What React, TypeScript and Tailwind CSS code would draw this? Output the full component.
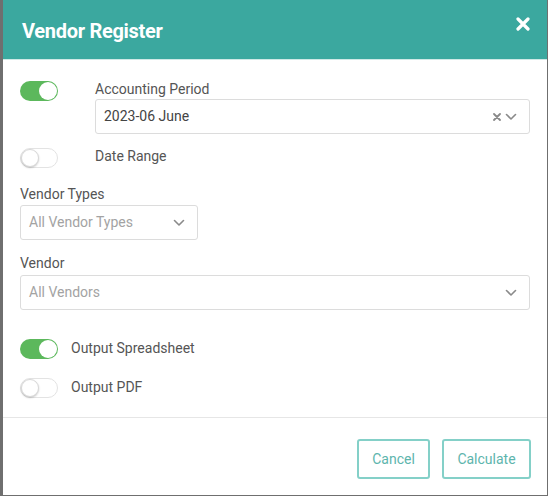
import React from "react";

function Toggle({ on }: { on: boolean }) {
  return (
    <div
      className={
        on
          ? "relative h-[20px] w-[38px] rounded-full bg-[#5cb85c]"
          : "relative h-[20px] w-[38px] rounded-full border border-[#e3e3e3] bg-white"
      }
    >
      <div
        className={
          on
            ? "absolute right-[1px] top-[1px] h-[18px] w-[18px] rounded-full bg-white"
            : "absolute left-0 top-0 h-[18px] w-[18px] rounded-full border border-[#d8d8d8] bg-white shadow-[0_1px_2px_rgba(0,0,0,0.2)]"
        }
      />
    </div>
  );
}

function Chevron() {
  return (
    <svg width="12" height="8" viewBox="0 0 12 8" fill="none">
      <path d="M1.5 1.5 L6 6 L10.5 1.5" stroke="#8a8a8a" strokeWidth="1.6" strokeLinecap="round" strokeLinejoin="round" />
    </svg>
  );
}

function Select({
  value,
  placeholder,
  clearable,
  className,
}: {
  value: string;
  placeholder?: boolean;
  clearable?: boolean;
  className?: string;
}) {
  return (
    <div
      className={
        "flex h-[35px] items-center justify-between rounded-[3px] border border-[#dcdcdc] bg-white pl-[8px] pr-[12px] " +
        (className ?? "")
      }
    >
      <span className={placeholder ? "text-[14px] text-[#a3a3a3]" : "text-[14px] text-[#444]"}>{value}</span>
      <div className="flex items-center gap-[4px]">
        {clearable && (
          <svg width="8" height="8" viewBox="0 0 8 8">
            <path d="M1 1 L7 7 M7 1 L1 7" stroke="#8a8a8a" strokeWidth="1.8" strokeLinecap="round" />
          </svg>
        )}
        <Chevron />
      </div>
    </div>
  );
}

export default function App() {
  return (
    <div className="h-[497px] w-[550px] bg-white" style={{ fontFamily: "Roboto, 'Liberation Sans', sans-serif" }}>
      <div className="flex h-[496px] w-[548px] flex-col border-b border-l-[3px] border-r border-[#6f6f6f] bg-white">
        <div className="flex h-[60px] shrink-0 items-center justify-between border-b border-[#cfe9e6] bg-[#3ba89f] pl-[19px] pr-[17px]">
          <h1 className="mt-[2px] text-[20px] font-bold tracking-[-0.3px] text-white">Vendor Register</h1>
          <svg width="14" height="14" viewBox="0 0 14 14" className="-mt-[12px]">
            <path d="M2 2 L12 12 M12 2 L2 12" stroke="white" strokeWidth="3.2" strokeLinecap="round" />
          </svg>
        </div>

        <div className="flex flex-1 flex-col px-[17px] pt-[20px] text-[#555]">
          <div className="flex">
            <div className="w-[75px] pt-[1px]">
              <Toggle on />
            </div>
            <div className="flex-1">
              <div className="text-[14px] leading-[18px] text-[#555]">Accounting Period</div>
              <Select value="2023-06 June" clearable className="mt-[1px]" />
            </div>
          </div>

          <div className="mt-[14px] flex items-center">
            <div className="w-[75px]">
              <Toggle on={false} />
            </div>
            <span className="-mt-[4px] text-[14px] text-[#555]">Date Range</span>
          </div>

          <div className="mt-[17px] text-[14px] leading-[18px] text-[#555]">Vendor Types</div>
          <Select value="All Vendor Types" placeholder className="mt-[2px] w-[178px]" />

          <div className="mt-[14px] text-[14px] leading-[18px] text-[#555]">Vendor</div>
          <Select value="All Vendors" placeholder className="mt-[3px]" />

          <div className="mt-[28px] flex items-center gap-[13px]">
            <Toggle on />
            <span className="text-[14px] text-[#555]">Output Spreadsheet</span>
          </div>
          <div className="mt-[18px] flex items-center gap-[13px]">
            <Toggle on={false} />
            <span className="text-[14px] text-[#555]">Output PDF</span>
          </div>
        </div>

        <div className="flex h-[78px] shrink-0 items-start justify-end gap-[12px] border-t border-[#e6e6e6] pr-[16px] pt-[21px]">
          <button className="h-[40px] w-[73px] rounded-[3px] border-2 border-[#84d0c8] text-[14px] text-[#5db5ad]">
            Cancel
          </button>
          <button className="h-[40px] w-[89px] rounded-[3px] border-2 border-[#84d0c8] text-[14px] text-[#5db5ad]">
            Calculate
          </button>
        </div>
      </div>
    </div>
  );
}
